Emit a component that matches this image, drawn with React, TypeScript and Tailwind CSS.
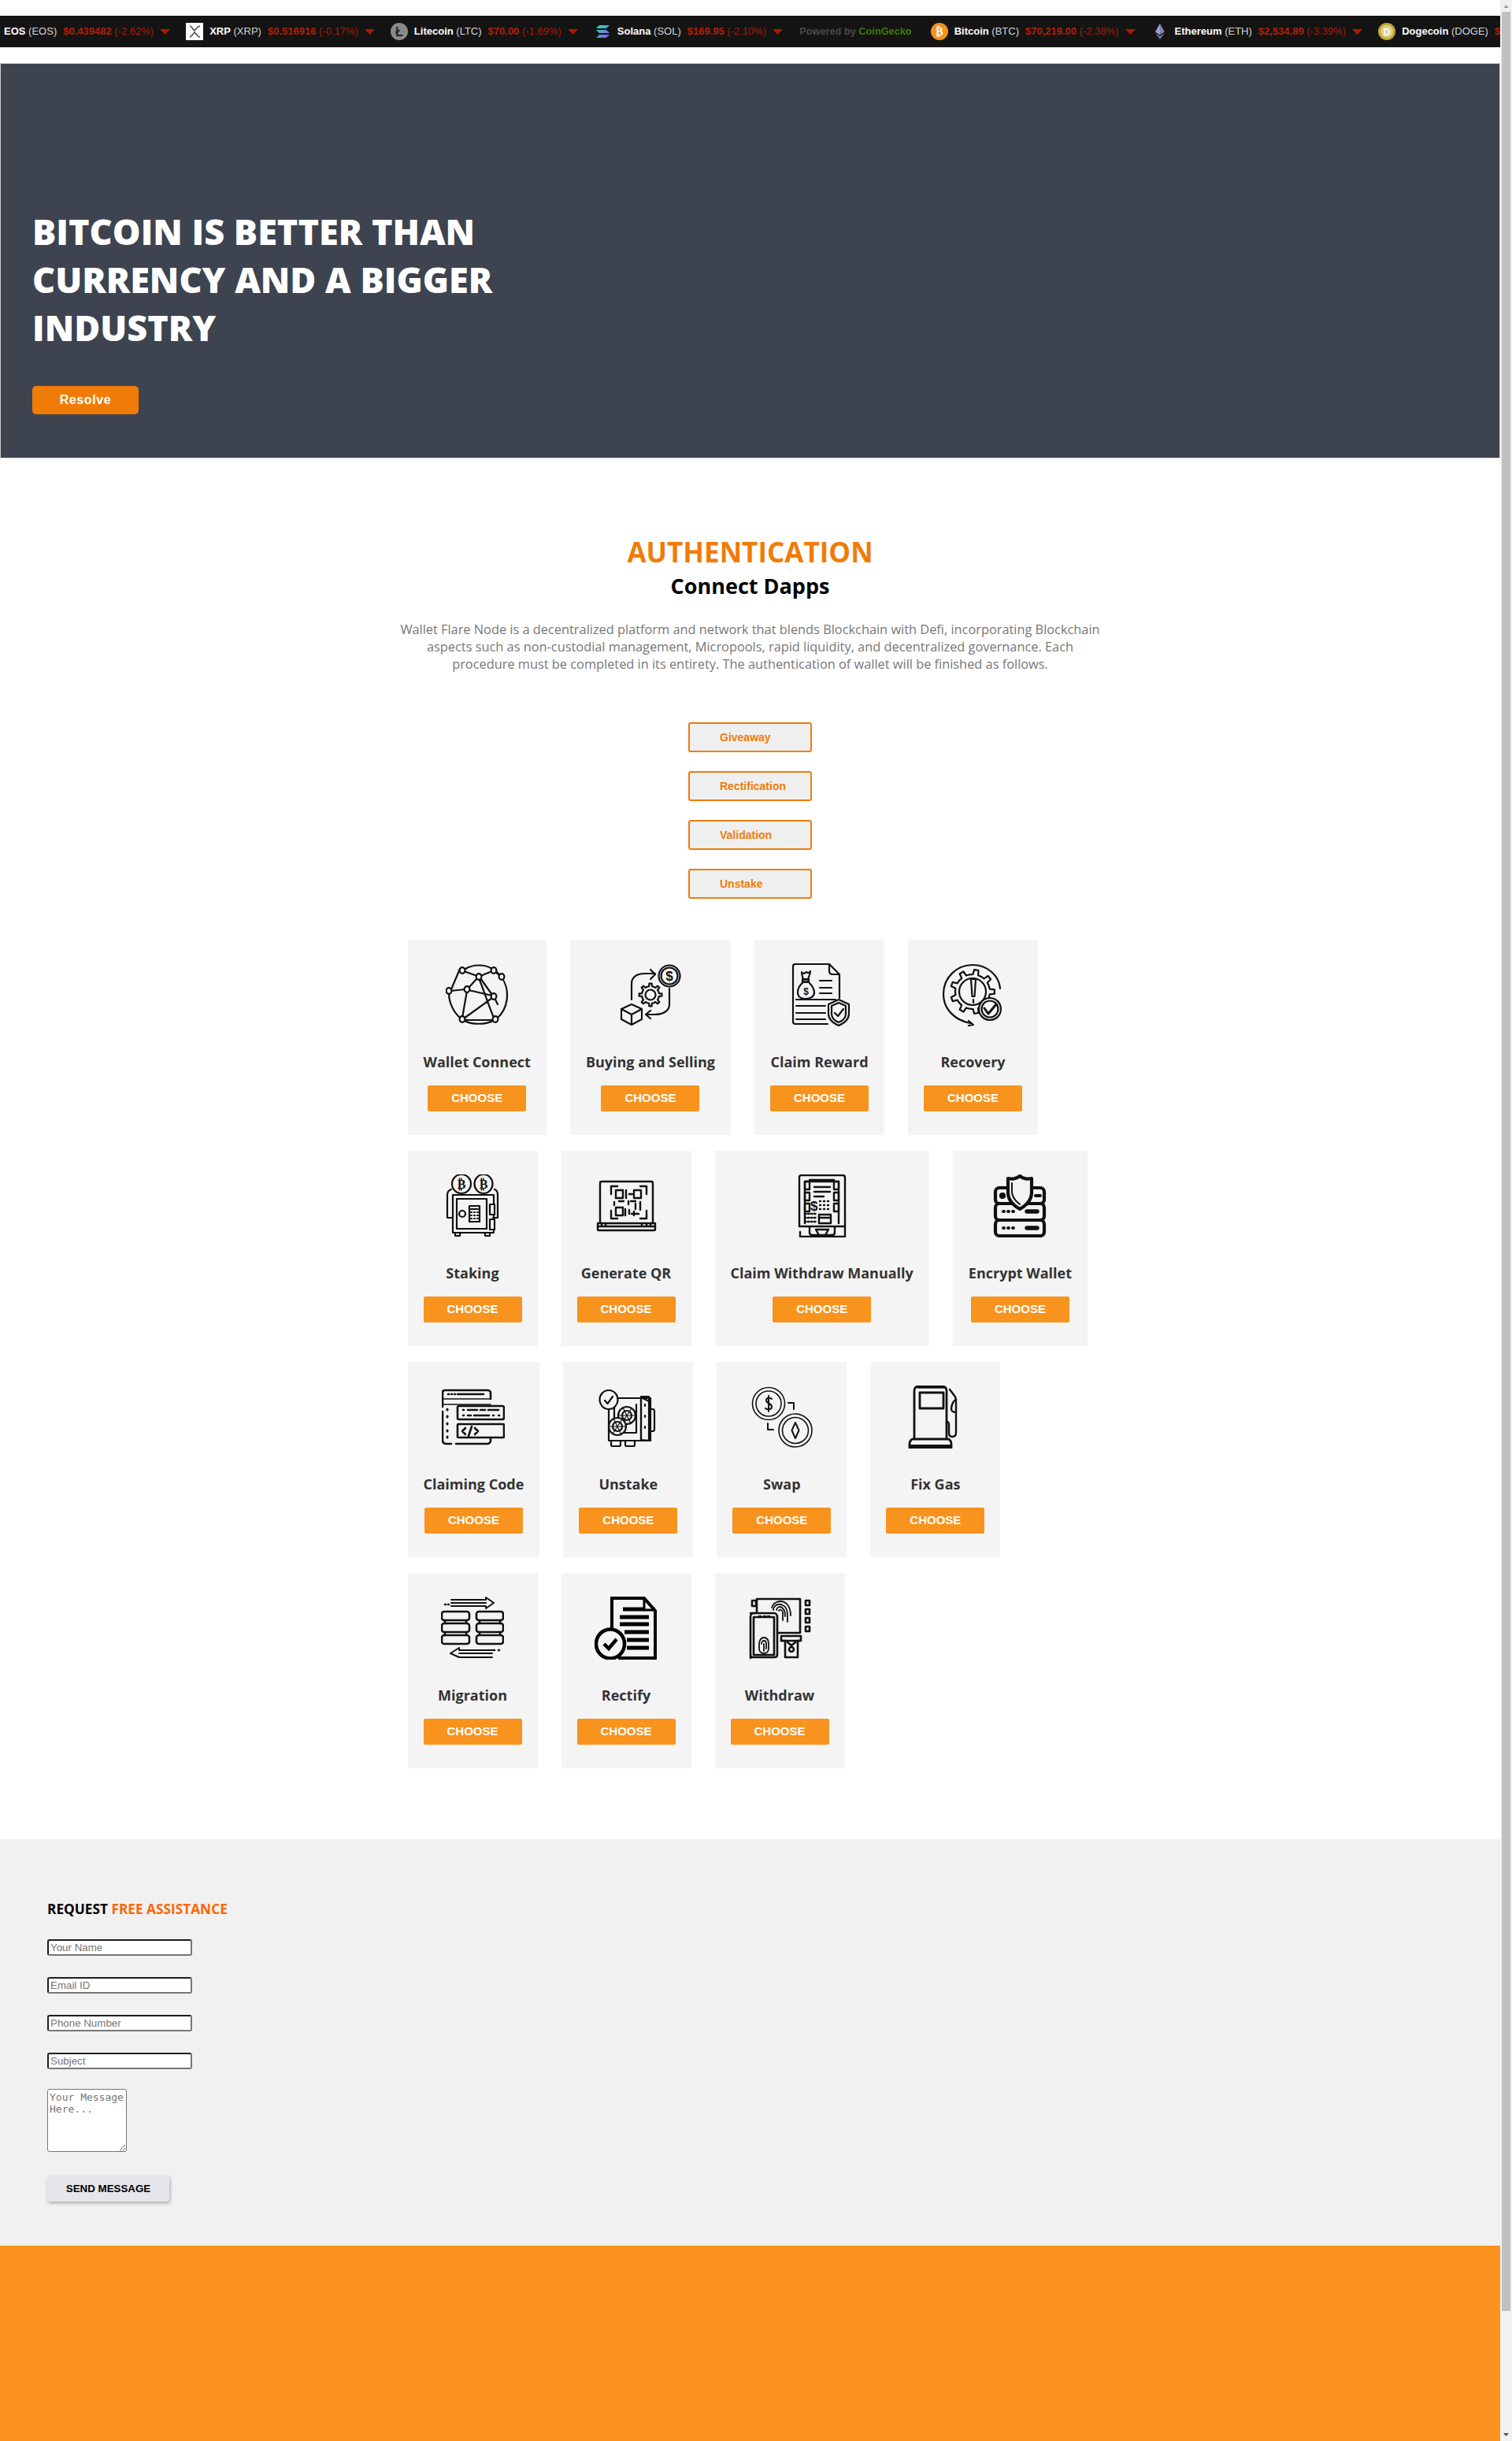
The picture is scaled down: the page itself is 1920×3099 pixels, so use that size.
import React from "react";

const gear = (cx: number, cy: number, r1: number, r2: number, n: number) => {
  let d = "";
  for (let i = 0; i < n; i++) {
    const s = (Math.PI * 2) / n;
    const a = i * s;
    const pts = [
      [r1, a - s * 0.5],
      [r1, a - s * 0.22],
      [r2, a - s * 0.14],
      [r2, a + s * 0.14],
      [r1, a + s * 0.22],
    ];
    pts.forEach(([r, t], j) => {
      d += `${i === 0 && j === 0 ? "M" : "L"}${(cx + r * Math.cos(t)).toFixed(1)} ${(cy + r * Math.sin(t)).toFixed(1)} `;
    });
  }
  return d + "Z";
};

function Svg({ children, w = 2.2 }: { children: React.ReactNode; w?: number }) {
  return (
    <svg viewBox="0 0 80 80" className="w-[80px] h-[80px]" fill="none" stroke="#111" strokeWidth={w} strokeLinecap="round" strokeLinejoin="round">
      {children}
    </svg>
  );
}

const IconGlobe = () => {
  const n = [[21, 9], [61, 9], [71, 17], [42, 17], [4, 35], [27, 33], [61, 42], [21, 71], [63, 71]];
  return (
    <Svg>
      <path d="M25 7C35 1 50 1 59 7M64 10C72 17 78 28 78 40C78 52 73 63 65 70M60 73C50 78 33 78 24 73M18 69C10 62 4 50 4 38" />
      <path d="M23 10L40 16M44 16L59 10M63 11L69 16M44 19L59 40M40 19L29 31M6 35L25 33M29 34L59 41M27 35L21 69M42 19C47 30 53 50 61 69M59 44L23 70M62 44L66 52M24 72L60 72M18 7L7 33" />
      {n.map(([x, y], i) => (
        <ellipse key={i} cx={x} cy={y} rx="3.4" ry="3.8" fill="#f4f4f4" />
      ))}
    </Svg>
  );
};

const IconExchange = () => (
  <Svg>
    <circle cx="64" cy="16" r="13.5" />
    <circle cx="64" cy="16" r="10.5" />
    <text x="64" y="22" textAnchor="middle" fontSize="17" fontWeight="700" fontFamily="Liberation Sans" fill="#111" stroke="none">$</text>
    <path d="M16 46V26C16 17 23 13 33 13H46M40 8L46 14L40 20" />
    <path d="M64 32V52C64 60 57 65 45 65H34M40 60L34 65L40 70" />
    <path d={gear(40, 40, 11, 14.5, 8)} />
    <circle cx="40" cy="40" r="6.5" />
    <path d="M16 52L29 58V71L16 78L3 71V58ZM3 58L16 65L29 58M16 65V78" />
  </Svg>
);

const IconClaim = () => (
  <Svg>
    <path d="M50 77H9C7 77 6 76 6 74V4C6 2 7 1 9 1H52L65 14V44M52 1V10C52 13 54 14 57 14H65" />
    <path d="M17 11C19 14 21 13 23 11C25 13 27 12 28 10C28 14 26 17 25 20H19C18 17 17 14 17 11Z" />
    <rect x="18" y="20" width="8" height="4" fill="#555" />
    <path d="M19 24C14 28 12 32 12 37C12 42 16 45 22 45C28 45 33 42 33 37C33 32 30 28 26 24Z" />
    <text x="22.5" y="40" textAnchor="middle" fontSize="12" fontWeight="700" fontFamily="Liberation Sans" fill="#111" stroke="none">$</text>
    <path d="M40 22H55M40 31H55M40 38H55M10 46H60M10 54H47M10 63H47M10 71H47" strokeWidth="2.2" />
    <path d="M64 46L77 52V64C77 71 71 76 64 79C57 76 51 71 51 64V52Z" fill="#f4f4f4" />
    <path d="M64 50L73 54V64C73 69 69 73 64 75C59 73 55 69 55 64V54Z" />
    <path d="M59 63L63 67L70 58" />
  </Svg>
);

const IconRecovery = () => (
  <Svg>
    <path d="M36 76C16 72 2 58 2 39C2 18 19 2 39 2C58 2 73 16 74 32" />
    <path d="M34 73L40 78L34 79" />
    <path d={gear(39, 36, 22, 28, 9)} />
    <circle cx="39" cy="36" r="17" />
    <path d="M37 20H43L41.5 42H38.5ZM40 46V50" strokeWidth="2.2" />
    <circle cx="61" cy="58" r="14" fill="#f4f4f4" />
    <circle cx="61" cy="58" r="10.5" />
    <path d="M54 57L59 64L69 52" strokeWidth="3" />
  </Svg>
);

const IconStaking = () => (
  <Svg>
    <path d="M13 19C10 20 8 23 8 26V55H15M68 19C71 20 72 23 72 26V55H66" />
    <ellipse cx="26" cy="12" rx="12" ry="12" fill="#f4f4f4" />
    <ellipse cx="54" cy="12" rx="11.5" ry="12" fill="#f4f4f4" />
    <text x="26" y="18" textAnchor="middle" fontSize="16" fontWeight="700" fontFamily="DejaVu Sans" fill="#111" stroke="none">₿</text>
    <text x="54" y="18" textAnchor="middle" fontSize="16" fontWeight="700" fontFamily="DejaVu Sans" fill="#111" stroke="none">₿</text>
    <rect x="15" y="26" width="52" height="48" />
    <rect x="20" y="31" width="38" height="38" />
    <path d="M18 74V78H24V74M56 74V78H62V74" />
    <rect x="62" y="38" width="6" height="13" fill="#f4f4f4" />
    <rect x="62" y="57" width="6" height="13" fill="#f4f4f4" />
    <circle cx="27" cy="50" r="4" />
    <rect x="36" y="40" width="13" height="20" />
    <path d="M38 44H47M38 48H39M42 48H43M46 48H47M38 52H39M42 52H43M46 52H47M38 56H39M42 56H43M46 56H47" />
  </Svg>
);

const IconQr = () => (
  <Svg w={2.4}>
    <path d="M7 61V11C7 10 8 9 9 9H72C73 9 74 10 74 11V61" />
    <path d="M4 62H77V70C77 71 76 71 75 71H6C5 71 4 71 4 70ZM4 66H77M9 62V66M14 62V66M60 62V66M66 62V66M71 62V66" />
    <path d="M21 25V15H29M58 15H66V25M21 46V56H29M58 56H66V46" />
    <rect x="27" y="20" width="9" height="10" />
    <rect x="50" y="20" width="9" height="10" />
    <rect x="27" y="42" width="9" height="10" />
    <path d="M40 20V30M44 25H48M25 35V39M31 34H37M43 34V38M46 34H52M52 37V44M58 35V45M39 44V52M44 45V50M47 50H56M50 47V52" />
  </Svg>
);

const IconAtm = () => (
  <Svg w={2.4}>
    <path d="M11 66V4C11 2 12 1 14 1H66C68 1 69 2 69 4V79H12V73" />
    <path d="M18 62V9H61V62" />
    <rect x="18" y="9" width="6" height="10" />
    <rect x="18" y="23" width="6" height="10" />
    <rect x="18" y="37" width="6" height="10" />
    <rect x="55" y="9" width="6" height="10" />
    <rect x="55" y="23" width="6" height="10" />
    <rect x="55" y="37" width="6" height="10" />
    <path d="M24 9V7H55V9" />
    <path d="M30 16H50M30 22H50M30 28H42" />
    <text x="25" y="46" fontSize="17" fontWeight="700" fontFamily="Liberation Sans" fill="#111" stroke="none">$</text>
    <path d="M37 34H38M42 34H43M47 34H48M37 39H38M42 39H43M47 39H48M37 44H38M42 44H43M47 44H48" strokeWidth="2.4" />
    <path d="M18 50H32M18 55H32M18 60H32" strokeWidth="2.4" strokeDasharray="1.5 2.5" />
    <rect x="36" y="51" width="15" height="11" />
    <path d="M36 55H51" />
    <path d="M12 66H69M24 66V74C24 76 26 77 28 77H52C54 77 56 76 56 74V66M32 70H48L44 77H36Z" />
  </Svg>
);

const IconEncrypt = () => (
  <Svg w={4.2}>
    <rect x="9" y="17" width="62" height="20" rx="5" />
    <rect x="9" y="37" width="62" height="21" rx="5" />
    <rect x="9" y="58" width="62" height="20" rx="5" />
    <circle cx="18" cy="27" r="2" fill="#111" />
    <path d="M60 27H66" strokeWidth="4" />
    <path d="M19 47H20M25 47H26M31 47H32M19 68H20M25 68H26M31 68H32" strokeWidth="3.8" />
    <path d="M49 47H62M49 68H62" strokeWidth="5.4" />
    <path d="M40 2C45 6 49 6 55 5V23C55 33 47 40 40 44C33 40 25 33 25 23V5C31 6 35 6 40 2Z" fill="#f4f4f4" />
    <path d="M30 11V22C30 29 35 34 40 38" strokeWidth="2" />
  </Svg>
);

const IconCode = () => (
  <Svg w={2.6}>
    <path d="M62 17V9C62 7 60 6 58 6H4C2 6 1 7 1 9V27M1 33V70C1 72 3 74 5 74H12M18 74H58C60 74 62 72 62 70V67" />
    <path d="M1 17H62M1 24H62" strokeWidth="1.6" />
    <path d="M8 11H9M12 11H13M16 11H17M20 11H53" />
    <path d="M7 30V31M7 39V40M7 48V49M7 57V58M7 65V66" strokeWidth="3" />
    <rect x="20" y="26" width="59" height="17" rx="2" fill="#f4f4f4" />
    <path d="M27 31H28M33 31H45M49 31H55M59 31H72M27 38H28M33 38H37M41 38H60M65 38H66M72 38H73" />
    <rect x="20" y="49" width="59" height="17" rx="1" fill="#f4f4f4" />
    <path d="M30 54L26 58L30 62M42 54L46 58L42 62M38 52L34 64" />
  </Svg>
);

const IconSafe = () => (
  <Svg>
    <path d="M15 24V70H68V16H28" />
    <path d="M68 21L56 15V69L68 70" />
    <rect x="56" y="14" width="10" height="56" />
    <path d="M22 28V60H50V24" />
    <path d="M66 30H71C72 30 73 31 73 33V55C73 57 72 58 71 58H66" />
    <path d="M61 24V26M61 38V40M61 52V54" />
    <path d="M18 70V75C18 76 19 77 20 77H28C29 77 30 76 30 75V70M36 70V75C36 76 37 77 38 77H46C47 77 48 76 48 75V70" />
    <circle cx="38" cy="38" r="11" />
    <circle cx="38" cy="38" r="6" />
    <path d="M33 28L43 48M28 38H48M32 47L44 29" strokeWidth="1.2" />
    <circle cx="26" cy="52" r="11" fill="#f4f4f4" />
    <circle cx="26" cy="52" r="6" />
    <path d="M21 42L31 62M16 52H36M20 61L32 43" strokeWidth="1.2" />
    <ellipse cx="15" cy="18" rx="11.5" ry="12" fill="#f4f4f4" />
    <path d="M10 19L13.5 23L20 14" />
  </Svg>
);

const IconSwap = () => (
  <Svg w={1.6}>
    <circle cx="23" cy="23" r="20.5" />
    <circle cx="23" cy="23" r="16" />
    <path d="M27 17C25 15 20 15 20 19C20 23 27 22 27 27C27 31 21 31 19 29M23 13V33" strokeWidth="2" />
    <path d="M48 22H55V30" strokeWidth="2" />
    <path d="M22 48V56H29" strokeWidth="2" />
    <circle cx="57" cy="57" r="21" />
    <circle cx="57" cy="57" r="16.5" />
    <path d="M57 47L52.5 57L57 67L61.5 57Z" strokeWidth="2" />
  </Svg>
);

const IconGas = () => (
  <Svg w={2.4}>
    <path d="M13 66V7C13 3 15 1 19 1H48C52 1 54 3 54 7V66" strokeWidth="2.8" />
    <path d="M18 2H50" strokeWidth="3.4" />
    <rect x="20" y="9" width="30" height="20" strokeWidth="2.8" />
    <path d="M58 5L64 13C66 15 66 17 66 20V60C66 64 63 65 61 65C58 65 57 63 57 60V50C57 47 56 46 54 46" />
    <path d="M66 18C61 20 60 28 60 30C60 32 62 34 66 34" />
    <path d="M11 68H56C57 68 60 70 60 74V79H7V74C7 70 10 68 11 68Z" strokeWidth="2.8" />
    <path d="M8 77H59" strokeWidth="4" strokeLinecap="butt" />
  </Svg>
);

const IconMigration = () => (
  <Svg w={2.6}>
    <path d="M13 3H57V0L67 7L57 14V11H13M13 7H57" strokeWidth="2" transform="translate(0 1)" />
    <path d="M5 10H6M9 10H10" />
    <path d="M67 71H23V68L12 75L23 80H65M23 75H65" strokeWidth="2" transform="translate(0 -3)" />
    <path d="M67 68H68M73 68H74" />
    <rect x="1" y="19" width="35" height="11" rx="3" />
    <rect x="1" y="34" width="35" height="11" rx="3" />
    <rect x="1" y="49" width="35" height="11" rx="3" />
    <rect x="45" y="19" width="34" height="11" rx="3" />
    <rect x="45" y="34" width="34" height="11" rx="3" />
    <rect x="45" y="49" width="34" height="11" rx="3" />
    <path d="M5 30V34M32 30V34M5 45V49M32 45V49M49 30V34M75 30V34M49 45V49M75 45V49" />
  </Svg>
);

const IconRectify = () => (
  <svg viewBox="0 0 80 80" className="w-[80px] h-[80px]" fill="none" stroke="#000" strokeLinecap="butt" strokeLinejoin="miter">
    <path d="M22 42V2H63L77 18V78H30" strokeWidth="4" />
    <path d="M63 2V17H77" strokeWidth="3" />
    <path d="M36 16H62M32 26H69M32 35H69M38 45H69M41 55H69M41 65H69" strokeWidth="5" />
    <ellipse cx="20" cy="60" rx="18" ry="18.5" fill="#f4f4f4" strokeWidth="4.5" />
    <path d="M12 60L18 66L28 54" strokeWidth="4.5" />
  </svg>
);

const IconWithdraw = () => (
  <Svg w={2.6}>
    <path d="M11 20V3H66V46H38" />
    <path d="M3 21H9M5 5H10V12H5ZM73 5H78V11H73ZM73 16H78V22H73ZM73 27H78V33H73ZM73 38H78V44H73Z" />
    <path d="M3 78V26C3 23 5 21 7 21H33C35 21 37 23 37 26V74C37 76 35 77 33 77H6C4 77 3 76 3 74ZM7 26H33V74H7Z" />
    <path d="M14 25H16M20 25H22M25 25H27" />
    <path d="M32 17C32 11 39 8 44 11C49 13 50 18 50 24V32M36 17C37 13 40 12 43 14C46 16 47 20 47 25M39 18C40 16 43 16 44 20V30M30 14C31 10 35 6 41 6C48 6 54 12 54 24" strokeWidth="1.8" />
    <path d="M14 60C14 55 17 52 20 52C24 52 26 55 26 60V66C26 70 23 72 20 72C17 72 14 70 14 66ZM17 60C17 57 19 56 20 56C22 56 23 58 23 60V66M20 60V69" strokeWidth="1.8" />
    <path d="M42 56V50H67V56H63V77H47V56Z" />
    <path d="M42 56H67M50 58L55 62L60 58" />
    <circle cx="55" cy="67" r="3" />
  </Svg>
);

const Coin = ({ children }: { children: React.ReactNode }) => (
  <svg viewBox="0 0 22 22" className="w-[22px] h-[22px] shrink-0">{children}</svg>
);

const coinFont = "Liberation Sans";
const coins: Record<string, React.ReactNode> = {
  xrp: (
    <Coin>
      <rect width="22" height="22" fill="#fff" />
      <path d="M5 4C7 4 8 7 11 10C14 7 15 4 18 4M5 18C7 18 8 15 11 12C14 15 15 18 18 18" fill="none" stroke="#444" strokeWidth="1.4" />
    </Coin>
  ),
  ltc: (
    <Coin>
      <circle cx="11" cy="11" r="11" fill="#8a8a8a" />
      <text x="11" y="17" textAnchor="middle" fontSize="16" fontWeight="700" fontFamily={coinFont} fill="#222">Ł</text>
    </Coin>
  ),
  sol: (
    <Coin>
      <defs>
        <linearGradient id="sg" x1="0" y1="0" x2="1" y2="1">
          <stop offset="0" stopColor="#14f195" />
          <stop offset="1" stopColor="#9945ff" />
        </linearGradient>
      </defs>
      <path d="M7 3H20L16 7H3ZM3 9H16L20 13H7ZM7 15H20L16 19H3Z" fill="url(#sg)" />
    </Coin>
  ),
  btc: (
    <Coin>
      <circle cx="11" cy="11" r="11" fill="#f7931a" />
      <text x="11" y="16" textAnchor="middle" fontSize="14" fontWeight="700" fontFamily="DejaVu Sans" fill="#fff">₿</text>
    </Coin>
  ),
  eth: (
    <Coin>
      <path d="M11 1L5 11.5L11 15L17 11.5Z" fill="#7c82b0" />
      <path d="M11 1L11 15L5 11.5Z" fill="#9aa0c8" />
      <path d="M5 13L11 21L17 13L11 16.5Z" fill="#6c7199" />
    </Coin>
  ),
  doge: (
    <Coin>
      <circle cx="11" cy="11" r="11" fill="#c2a633" />
      <circle cx="11" cy="11" r="8" fill="#e1cf86" />
      <text x="11" y="15.5" textAnchor="middle" fontSize="12" fontWeight="700" fontFamily={coinFont} fill="#fff">D</text>
    </Coin>
  ),
};

const Caret = () => (
  <svg viewBox="0 0 13 7" className="w-[13px] h-[7px] shrink-0 ml-[8px]">
    <path d="M0 0H13L6.5 7Z" fill="#a61c09" />
  </svg>
);

function Tick({ coin, name, sym, price, pct }: { coin?: string; name: string; sym: string; price: string; pct?: string }) {
  return (
    <div className="flex items-center shrink-0 mx-[10px] whitespace-nowrap">
      {coin && <span className="mr-[8px] flex">{coins[coin]}</span>}
      <span className="text-white font-bold">{name}</span>
      <span className="text-[#d4d4d4] ml-[3.6px]">({sym})</span>
      <span className="text-[#b01f0a] font-bold ml-[8px]">{price}</span>
      {pct && <span className="text-[#a61c09] ml-[3.6px]">({pct})</span>}
      {pct && <Caret />}
    </div>
  );
}

const cards: [string, React.FC][] = [
  ["Wallet Connect", IconGlobe],
  ["Buying and Selling", IconExchange],
  ["Claim Reward", IconClaim],
  ["Recovery", IconRecovery],
  ["Staking", IconStaking],
  ["Generate QR", IconQr],
  ["Claim Withdraw Manually", IconAtm],
  ["Encrypt Wallet", IconEncrypt],
  ["Claiming Code", IconCode],
  ["Unstake", IconSafe],
  ["Swap", IconSwap],
  ["Fix Gas", IconGas],
  ["Migration", IconMigration],
  ["Rectify", IconRectify],
  ["Withdraw", IconWithdraw],
];

const inputCls =
  "block w-[184px] h-[21px] mb-[27px] bg-white border-2 border-t-[#1e1e1e] border-l-[#1e1e1e] border-r-[#767676] border-b-[#767676] rounded-[3px] px-[2px] text-[13.33px] leading-[16px] font-['Liberation_Sans',sans-serif] placeholder:text-[#757575] outline-none";

export default function App() {
  return (
    <div className="relative w-full h-[3099px] overflow-hidden bg-white font-['Open_Sans',sans-serif]">
      <main className="mr-[15px]">
        <div className="h-[20px]" />
        <div className="flex items-center h-[40px] bg-[#141414] overflow-hidden text-[13px] font-['Liberation_Sans',sans-serif]">
          <div className="flex items-center shrink-0 -ml-[5px]">
            <Tick name="EOS" sym="EOS" price="$0.439482" pct="-2.62%" />
            <Tick coin="xrp" name="XRP" sym="XRP" price="$0.516916" pct="-0.17%" />
            <Tick coin="ltc" name="Litecoin" sym="LTC" price="$70.00" pct="-1.69%" />
            <Tick coin="sol" name="Solana" sym="SOL" price="$169.95" pct="-2.10%" />
            <div className="shrink-0 ml-[11px] mr-[14px] text-[12.75px] font-bold whitespace-nowrap text-[#4a4a4a]">
              Powered by <span className="text-[#3f7a00]">CoinGecko</span>
            </div>
            <Tick coin="btc" name="Bitcoin" sym="BTC" price="$70,219.00" pct="-2.38%" />
            <Tick coin="eth" name="Ethereum" sym="ETH" price="$2,534.89" pct="-3.39%" />
            <Tick coin="doge" name="Dogecoin" sym="DOGE" price="$" />
          </div>
        </div>
        <div className="h-[20px]" />

        <section className="h-[502px] bg-[#3d4450] border border-[#cfcfcf] pl-[40px] pt-[182px]">
          <h1 className="w-[620px] text-[45px] leading-[61px] font-extrabold text-white">
            BITCOIN IS BETTER THAN CURRENCY AND A BIGGER INDUSTRY
          </h1>
          <button className="mt-[44px] block w-[135px] h-[36px] rounded-[5px] bg-[#f07c08] text-white text-[16px] font-bold tracking-[0.6px] font-['Liberation_Sans',sans-serif]">
            Resolve
          </button>
        </section>

        <section className="pt-[97px] pb-[90px] text-center">
          <h2 className="text-[35px] leading-[44px] font-bold text-[#f07c08]">AUTHENTICATION</h2>
          <h3 className="mt-[5px] text-[27px] leading-[31px] font-bold text-black">Connect Dapps</h3>
          <p className="mx-auto mt-[29px] w-[900px] text-[16.35px] leading-[22px] text-[#777]">
            Wallet Flare Node is a decentralized platform and network that blends Blockchain with Defi, incorporating Blockchain aspects such as non-custodial management, Micropools, rapid liquidity, and decentralized governance. Each procedure must be completed in its entirety. The authentication of wallet will be finished as follows.
          </p>
          <div className="mt-[63px] flex flex-col items-center gap-[24px]">
            {["Giveaway", "Rectification", "Validation", "Unstake"].map((t) => (
              <button key={t} className="w-[157px] h-[38px] pl-[38px] text-left border-2 border-[#f07c08] rounded-[3px] bg-[#efefef] text-[#f07c08] text-[14px] font-bold font-['Liberation_Sans',sans-serif]">
                {t}
              </button>
            ))}
          </div>
          <div className="mx-auto mt-[52px] w-[870px] flex flex-wrap gap-x-[30px] gap-y-[20px]">
            {cards.map(([title, Icon]) => (
              <div key={title} className="flex flex-col items-center w-auto min-w-[165px] h-[248px] bg-[#f4f4f4] px-[20px] pt-[30px]">
                <Icon />
                <h4 className="mt-[33px] text-[18px] leading-[25px] font-bold text-[#333] whitespace-nowrap">{title}</h4>
                <button className="mt-[17px] w-[125px] h-[33px] rounded-[2px] bg-[#f8931d] text-white text-[15px] font-bold font-['Liberation_Sans',sans-serif]">
                  CHOOSE
                </button>
              </div>
            ))}
          </div>
        </section>

        <section className="h-[516px] bg-[#f1f1f1] pl-[60px] pt-[76px]">
          <h3 className="text-[17.25px] leading-[25px] font-bold text-black">
            REQUEST <span className="text-[#ff6600]">FREE ASSISTANCE</span>
          </h3>
          <form className="mt-[26px]">
            <input className={inputCls} placeholder="Your Name" />
            <input className={inputCls} placeholder="Email ID" />
            <input className={inputCls} placeholder="Phone Number" />
            <input className={inputCls} placeholder="Subject" />
            <textarea
              rows={5}
              placeholder="Your Message Here..."
              className="block mt-[-2px] w-[101px] h-[80px] bg-white border border-[#767676] rounded-[3px] p-[2px] text-[13px] leading-[15px] font-['DejaVu_Sans_Mono',monospace] placeholder:text-[#757575] outline-none"
            />
            <button type="button" className="block mt-[30px] w-[155px] h-[33px] rounded-[3px] bg-[#e6e6ea] shadow-[1px_2px_4px_rgba(0,0,0,0.3)] text-[13.33px] font-bold text-black font-['Liberation_Sans',sans-serif]">
              SEND MESSAGE
            </button>
          </form>
        </section>

        <section className="h-[248px] bg-[#fb921e]" />
      </main>

      <aside className="absolute right-0 top-0 bottom-0 w-[15px] bg-[#f1f1f1]">
        <svg viewBox="0 0 15 15" className="w-[15px] h-[15px]"><path d="M4 10H11L7.5 6Z" fill="#a3a3a3" /></svg>
        <div className="absolute left-[2px] right-[2px] top-[15px] h-[2919px] bg-[#c1c1c1]" />
        <svg viewBox="0 0 15 15" className="absolute bottom-0 w-[15px] h-[15px]"><path d="M4 5H11L7.5 9Z" fill="#505050" /></svg>
      </aside>
    </div>
  );
}
